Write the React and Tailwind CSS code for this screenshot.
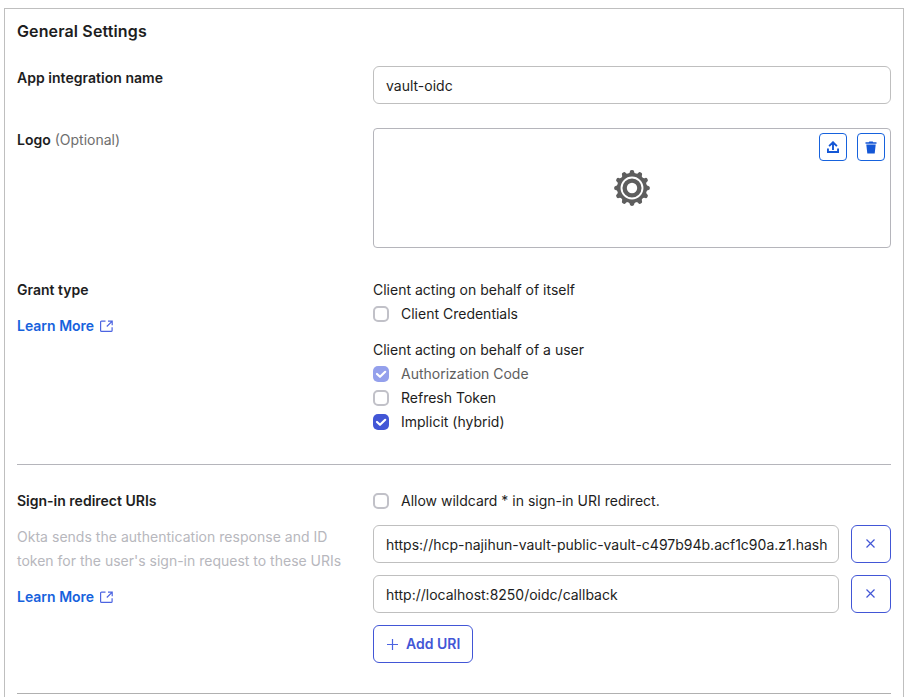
const INK = "text-[#1d1d21]";

function ExternalIcon() {
  return (
    <svg className="ml-[6px] h-[13px] w-[13px]" viewBox="0 0 13 13" fill="none" stroke="#4c64e1" strokeWidth="1.2">
      <path d="M5.5 1.1H1.6a1 1 0 0 0-1 1v8.3a1 1 0 0 0 1 1h9.500a1 1 0 0 0 1-1V7.300" />
      <path d="M8 1.1h4.2v4.2M12 1.3 6.8 6.5" />
    </svg>
  );
}

function LearnMore() {
  return (
    <a className="flex items-center text-[#1662dd] font-semibold">
      <span>Learn More</span>
      <ExternalIcon />
    </a>
  );
}

function Checkbox({ label, checked, disabled }) {
  const box = checked
    ? disabled
      ? "bg-[#94a0ec]"
      : "bg-[#4256d6]"
    : "border-2 border-[#c1c1c8] bg-white";
  return (
    <label className="flex h-6 items-center gap-3">
      <span className={`flex h-4 w-4 items-center justify-center rounded-[5px] ${box}`}>
        {checked && (
          <svg className="h-4 w-4" viewBox="0 0 16 16" fill="none" stroke="#fff" strokeWidth="2.2" strokeLinecap="round" strokeLinejoin="round">
            <path d="m4 8 3 2.8 5.2-5" />
          </svg>
        )}
      </span>
      <span className={disabled ? "text-[#5e5e5e]" : INK}>{label}</span>
    </label>
  );
}

function Field({ value }) {
  return (
    <div className="flex h-[38px] min-w-0 flex-1 items-center whitespace-nowrap rounded-[6px] border border-[#bfbfbf] pl-3 pr-2 pt-px">
      <span>{value}</span>
    </div>
  );
}

function UriRow({ value }) {
  return (
    <div className="flex gap-3">
      <Field value={value} />
      <button className="flex h-[38px] w-10 items-center justify-center rounded-[6px] border border-[#4256d6] pb-px pr-px">
        <svg className="h-[9px] w-[9px]" viewBox="0 0 9 9" fill="none" stroke="#4256d6" strokeWidth="1.2">
          <path d="m.5.5 8 8M8.500.5l-8 8" />
        </svg>
      </button>
    </div>
  );
}

function Gear() {
  const teeth = Array.from({ length: 12 }, (_, i) => i * 30);
  return (
    <svg className="mb-px mr-px h-9 w-9" viewBox="-18 -18 36 36">
      <g fill="#5e5e5e">
        {teeth.map((angle) => (
          <path key={angle} transform={`rotate(${angle})`} d="M-3.700-14Q-2.100-15-2.100-16.500Q-1.900-17.900 0-17.900Q1.900-17.900 2.100-16.500Q2.100-15 3.700-14Z" />
        ))}
        <circle r="14.900" />
      </g>
      <circle r="10.500" fill="none" stroke="#fff" strokeWidth="1.900" />
      <circle r="5.200" fill="#fff" />
    </svg>
  );
}

function Row({ label, children }) {
  return (
    <div className="flex">
      <div className="w-[356px] shrink-0">{label}</div>
      <div className="min-w-0 flex-1">{children}</div>
    </div>
  );
}

export default function App() {
  return (
    <main className="h-[697px] w-[912px] overflow-hidden bg-white pl-1 pt-2 font-['Inter','Liberation_Sans',sans-serif] text-[14px] leading-6 text-[#1d1d21]">
      <section className="h-[720px] w-[900px] border border-[#bfbfbf] px-3 pt-[10px]">
        <h2 className="text-[16px] font-semibold leading-6 tracking-[0.13px]">General Settings</h2>
        <div className="mt-[23px]">
          <Row label={<span className="font-semibold tracking-[0.03px]">App integration name</span>}>
            <div className="flex"><Field value="vault-oidc" /></div>
          </Row>
        </div>
        <div className="mt-6">
          <Row label={<><span className="font-semibold">Logo</span> <span className="text-[#6e6e6e]">(Optional)</span></>}>
            <div className="relative flex h-[120px] items-center justify-center rounded-[4px] border border-[#b5b5bb]">
              <Gear />
              <div className="absolute right-[5px] top-1 flex gap-[10px]">
                <button className="flex h-7 w-7 items-center justify-center rounded-[4px] border border-[#1662dd]">
                  <svg className="h-3 w-3" viewBox="0 0 12 12" fill="none" stroke="#1457d6" strokeWidth="1.900">
                    <path d="M6 9V1.300M2.100 5.200 6 1.300 9.900 5.200M.95 7.500v3.500h10.100V7.500" />
                  </svg>
                </button>
                <button className="flex h-7 w-7 items-center justify-center rounded-[4px] border border-[#1662dd]">
                  <svg className="h-[13px] w-3" viewBox="0 0 12 13" fill="#1457d6">
                    <path d="M.5 1.200h3.300L4.300.5h3.400l.5.700h3.300v1.600H.5zM1.300 3.500h9.400L9.700 12.500H2.300z" />
                  </svg>
                </button>
              </div>
            </div>
          </Row>
        </div>
        <div className="mt-[30px]">
          <Row label={<div className="flex flex-col gap-3"><span className="font-semibold">Grant type</span><LearnMore /></div>}>
            <div>Client acting on behalf of itself</div>
            <Checkbox label="Client Credentials" />
            <div className="mt-3">Client acting on behalf of a user</div>
            <Checkbox label="Authorization Code" checked disabled />
            <Checkbox label="Refresh Token" />
            <Checkbox label="Implicit (hybrid)" checked />
          </Row>
        </div>
        <hr className="mt-[30px] border-[#b5b5bb]" />
        <div className="mt-6">
          <Row
            label={
              <div className="flex flex-col gap-3">
                <span className="font-semibold">Sign-in redirect URIs</span>
                <p className="text-[#b7b7bd]">
                  <span className="tracking-[0.025px]">Okta sends the authentication response and ID</span>
                  <br />
                  token for the user's sign-in request to these URIs
                </p>
                <LearnMore />
              </div>
            }
          >
            <div className="flex flex-col gap-3">
              <Checkbox label="Allow wildcard * in sign-in URI redirect." />
              <UriRow value="https://hcp-najihun-vault-public-vault-c497b94b.acf1c90a.z1.hash" />
              <UriRow value="http://localhost:8250/oidc/callback" />
              <button className="flex h-[38px] w-[100px] items-center gap-2 rounded-[6px] border border-[#4256d6] pl-[13px] font-semibold text-[#4256d6]">
                <svg className="h-[11px] w-[11px]" viewBox="0 0 11 11" fill="none" stroke="#4c64e1" strokeWidth="1.200">
                  <path d="M5.500 0v11M0 5.500h11" />
                </svg>
                <span>Add URI</span>
              </button>
            </div>
          </Row>
        </div>
        <hr className="mt-[30px] border-[#b0b0b0]" />
      </section>
    </main>
  );
}
